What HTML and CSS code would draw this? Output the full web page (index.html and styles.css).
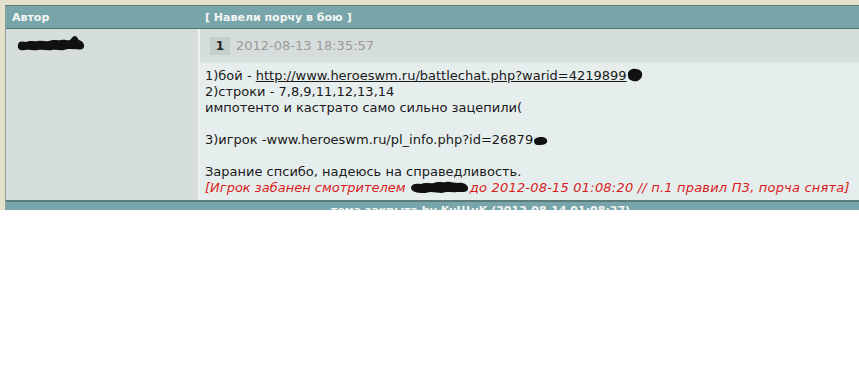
FILE: index.html
```html
<!DOCTYPE html>
<html lang="ru">
<head>
<meta charset="utf-8">
<title>Навели порчу в бою</title>
<link rel="stylesheet" href="styles.css">
</head>
<body>
<div class="page">
  <div class="forum">
    <div class="head">
      <div class="head-author">Автор</div>
      <div class="head-topic">[ Навели порчу в бою ]</div>
    </div>
    <div class="post">
      <div class="author">
        <svg class="blot-name" width="68" height="16" viewBox="0 0 68 16"><path d="M1 9 C1 5 5 5 9 6 C13 4 17 6 21 5 C25 4 28 6 32 5 C36 3 40 5 44 4 C48 3 50 5 53 4 C55 2 56 0 58 0 C60 0 61 3 62 4 C65 5 68 8 67 11 C66 14 62 14 59 13 C55 14 51 12 47 14 C43 15 39 13 35 14 C30 15 26 13 21 14 C16 15 12 13 8 14 C3 15 0 13 1 9 Z" fill="#111"/></svg>
      </div>
      <div class="content">
        <div class="post-head">
          <span class="num">1</span>
          <span class="date">2012-08-13 18:35:57</span>
        </div>
        <div class="post-body">
          <div>1)бой - <a class="link" href="#">http://www.heroeswm.ru/battlechat.php?warid=4219899<svg class="blot" width="16" height="14" viewBox="0 0 16 14"><path d="M1 7 C0 3 5 0 9 1 C13 1 16 4 15 8 C14 12 10 14 6 13 C2 12 1 10 1 7 Z" fill="#111"/></svg></a></div>
          <div>2)строки - 7,8,9,11,12,13,14</div>
          <div>импотенто и кастрато само сильно зацепили(</div>
          <div class="blank">&nbsp;</div>
          <div>3)игрок -www.heroeswm.ru/pl_info.php?id=26879<svg class="blot" width="15" height="10" viewBox="0 0 15 10"><path d="M1 5 C1 2 5 1 8 1 C12 1 15 3 14 6 C13 9 8 9 5 9 C2 9 1 7 1 5 Z" fill="#111"/></svg></div>
          <div class="blank">&nbsp;</div>
          <div>Зарание спсибо, надеюсь на справедливость.</div>
          <div class="ban">[Игрок забанен смотрителем <svg class="blot" width="60" height="14" viewBox="0 0 60 14"><path d="M1 8 C1 4 6 3 11 4 C15 2 19 4 24 3 C28 1 32 3 36 2 C40 1 44 3 48 3 C53 2 59 5 58 9 C57 13 52 12 47 12 C42 13 37 11 32 13 C26 13 21 11 16 13 C10 13 2 13 1 8 Z" fill="#111"/></svg><span class="ban-tail">до 2012-08-15 01:08:20 // п.1 правил П3, порча снята]</span></div>
        </div>
      </div>
    </div>
    <div class="foot">тема закрыта by KуЩuK (2012-08-14 01:08:27)</div>
  </div>
</div>
</body>
</html>
```

FILE: styles.css
```css
html, body {
  margin: 0;
  padding: 0;
  background: #ffffff;
}
.page {
  height: 205px;
  overflow: hidden;
  background: #e3e0cb;
  padding: 5px 0 0 5px;
  font-family: "DejaVu Sans", Verdana, sans-serif;
  font-size: 13px;
  color: #1a1a1a;
}
.forum {
  border-top: 1px solid #5c7c7c;
  border-left: 1px solid #8c9c9a;
  background: #d5dedc;
}
.head {
  display: flex;
  height: 22px;
  align-items: center;
  background: #78a5aa;
  border-bottom: 1px solid #557575;
  color: #f4f6f4;
  font-weight: bold;
  font-size: 11px;
}
.head-author {
  width: 194px;
  padding-left: 6px;
  box-sizing: border-box;
}
.head-topic {
  padding-left: 5px;
}
.post {
  display: flex;
  height: 171px;
}
.author {
  width: 194px;
  flex: none;
  border-right: 2px solid #eef3f2;
  padding: 7px 0 0 11px;
  box-sizing: border-box;
}
.blot-name { display: block; }
.content {
  flex: 1;
  display: flex;
  flex-direction: column;
}
.post-head {
  height: 34px;
  display: flex;
  align-items: center;
  padding-left: 10px;
  gap: 6px;
  border-bottom: 1px solid #dde5e3;
  box-sizing: border-box;
}
.num {
  width: 20px;
  height: 18px;
  background: #c4cfcc;
  color: #222;
  font-weight: bold;
  font-size: 12px;
  text-align: center;
  line-height: 18px;
}
.date {
  color: #9a9a9a;
}
.post-body {
  flex: 1;
  background: #e6eeed;
  padding: 5px 0 0 5px;
  line-height: 16px;
  white-space: nowrap;
}
.link {
  color: #1a1a1a;
  text-decoration: underline;
}
.blot {
  vertical-align: -2px;
}
.ban {
  color: #d91c1c;
  font-style: italic;
}
.ban-tail {
  letter-spacing: 0.2px;
}
.foot {
  border-top: 2px solid #5c7c7c;
  background: #78a5aa;
  color: #f4f6f4;
  font-weight: bold;
  font-size: 11px;
  padding: 2px 0 0 325px;
  height: 20px;
}
```
